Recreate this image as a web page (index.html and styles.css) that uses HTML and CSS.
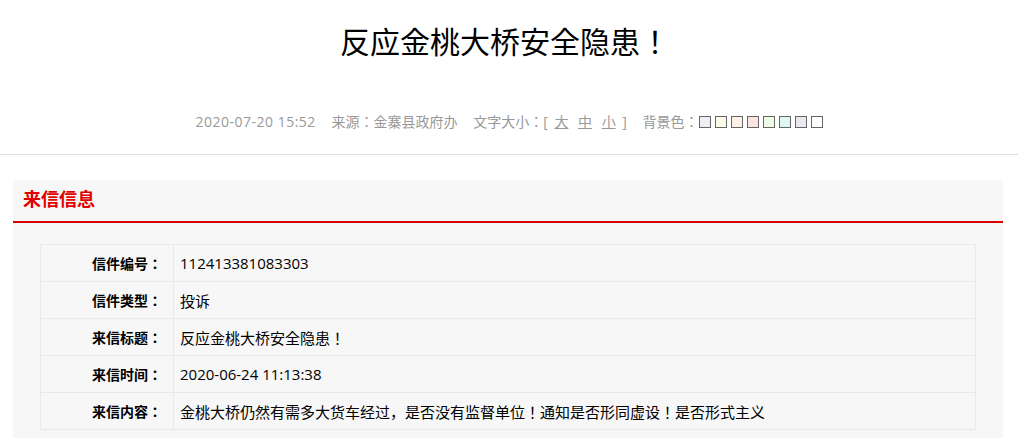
FILE: index.html
```html
<!DOCTYPE html>
<html lang="zh-CN">
<head>
    <meta charset="UTF-8">
    <title>反应金桃大桥安全隐患！</title>
    <link rel="stylesheet" href="styles.css">
</head>
<body>
    <div class="page">
        <!-- Article title -->
        <div class="article-head">
            <h1>反应金桃大桥安全隐患！</h1>
            <div class="meta">
                <span class="date">2020-07-20 15:52</span>
                <span>来源：金寨县政府办</span>
                <span>文字大小：[ <a href="#">大</a> <a href="#">中</a> <a href="#">小</a> ]</span>
                <span class="bg-picker">背景色：<i style="background:#eeeef4"></i><i style="background:#fbfbe6"></i><i style="background:#fdf0e4"></i><i style="background:#fbe4e0"></i><i style="background:#eefce4"></i><i style="background:#ddf8f2"></i><i style="background:#e8e8ee"></i><i style="background:#ffffff"></i></span>
            </div>
        </div>

        <!-- Letter info -->
        <div class="panel">
            <div class="panel-title">来信信息</div>
            <div class="panel-body">
                <table class="info">
                    <tr>
                        <th>信件编号：</th>
                        <td>112413381083303</td>
                    </tr>
                    <tr>
                        <th>信件类型：</th>
                        <td>投诉</td>
                    </tr>
                    <tr>
                        <th>来信标题：</th>
                        <td>反应金桃大桥安全隐患！</td>
                    </tr>
                    <tr>
                        <th>来信时间：</th>
                        <td>2020-06-24 11:13:38</td>
                    </tr>
                    <tr>
                        <th>来信内容：</th>
                        <td>金桃大桥仍然有需多大货车经过，是否没有监督单位！通知是否形同虚设！是否形式主义</td>
                    </tr>
                </table>
            </div>
        </div>
    </div>
</body>
</html>
```

FILE: styles.css
```css
body {
    margin: 0;
    padding: 0;
    background: #fff;
    font-family: "Open Sans", "Noto Sans CJK JP", "Noto Sans CJK SC", sans-serif;
    font-feature-settings: "locl" 0;
    text-spacing-trim: space-all;
    color: #000;
}

.page {
    width: 1018px;
}

/* Title block */
.article-head {
    text-align: center;
    border-bottom: 1px solid #ddd;
    padding-top: 20px;
    padding-bottom: 20px;
}

.article-head h1 {
    margin: 0;
    padding-right: 8px;
    font-size: 30px;
    font-weight: normal;
    line-height: 44px;
    color: #000;
}

.meta {
    margin-top: 46px;
    padding-left: 4px;
    font-size: 14px;
    line-height: 24px;
    color: #999;
}

.meta span {
    margin: 0 6px;
}

.meta .date {
    letter-spacing: 0.5px;
}

.meta a {
    color: #999;
    text-decoration: underline;
    margin: 0 3px;
}

.bg-picker i {
    display: inline-block;
    width: 10px;
    height: 10px;
    border: 1px solid #666;
    margin-right: 4px;
    vertical-align: -1px;
}

/* Panel */
.panel {
    margin: 25px 0 0 13px;
    width: 990px;
    background: #f7f7f7;
}

.panel-title {
    height: 41px;
    line-height: 39px;
    padding-left: 10px;
    font-size: 18px;
    font-weight: bold;
    color: #e00000;
    border-bottom: 2px solid #d90000;
}

.panel-body {
    padding: 21px 27px 20px 27px;
}

.info {
    width: 100%;
    border-collapse: collapse;
    font-size: 14px;
}

.info th,
.info td {
    border: 1px solid #e9e9e9;
    height: 36px;
    padding: 0;
}

.info th {
    width: 121px;
    text-align: right;
    padding-right: 11px;
    font-weight: bold;
}

.info td {
    padding-left: 6px;
    font-size: 15px;
}
```
